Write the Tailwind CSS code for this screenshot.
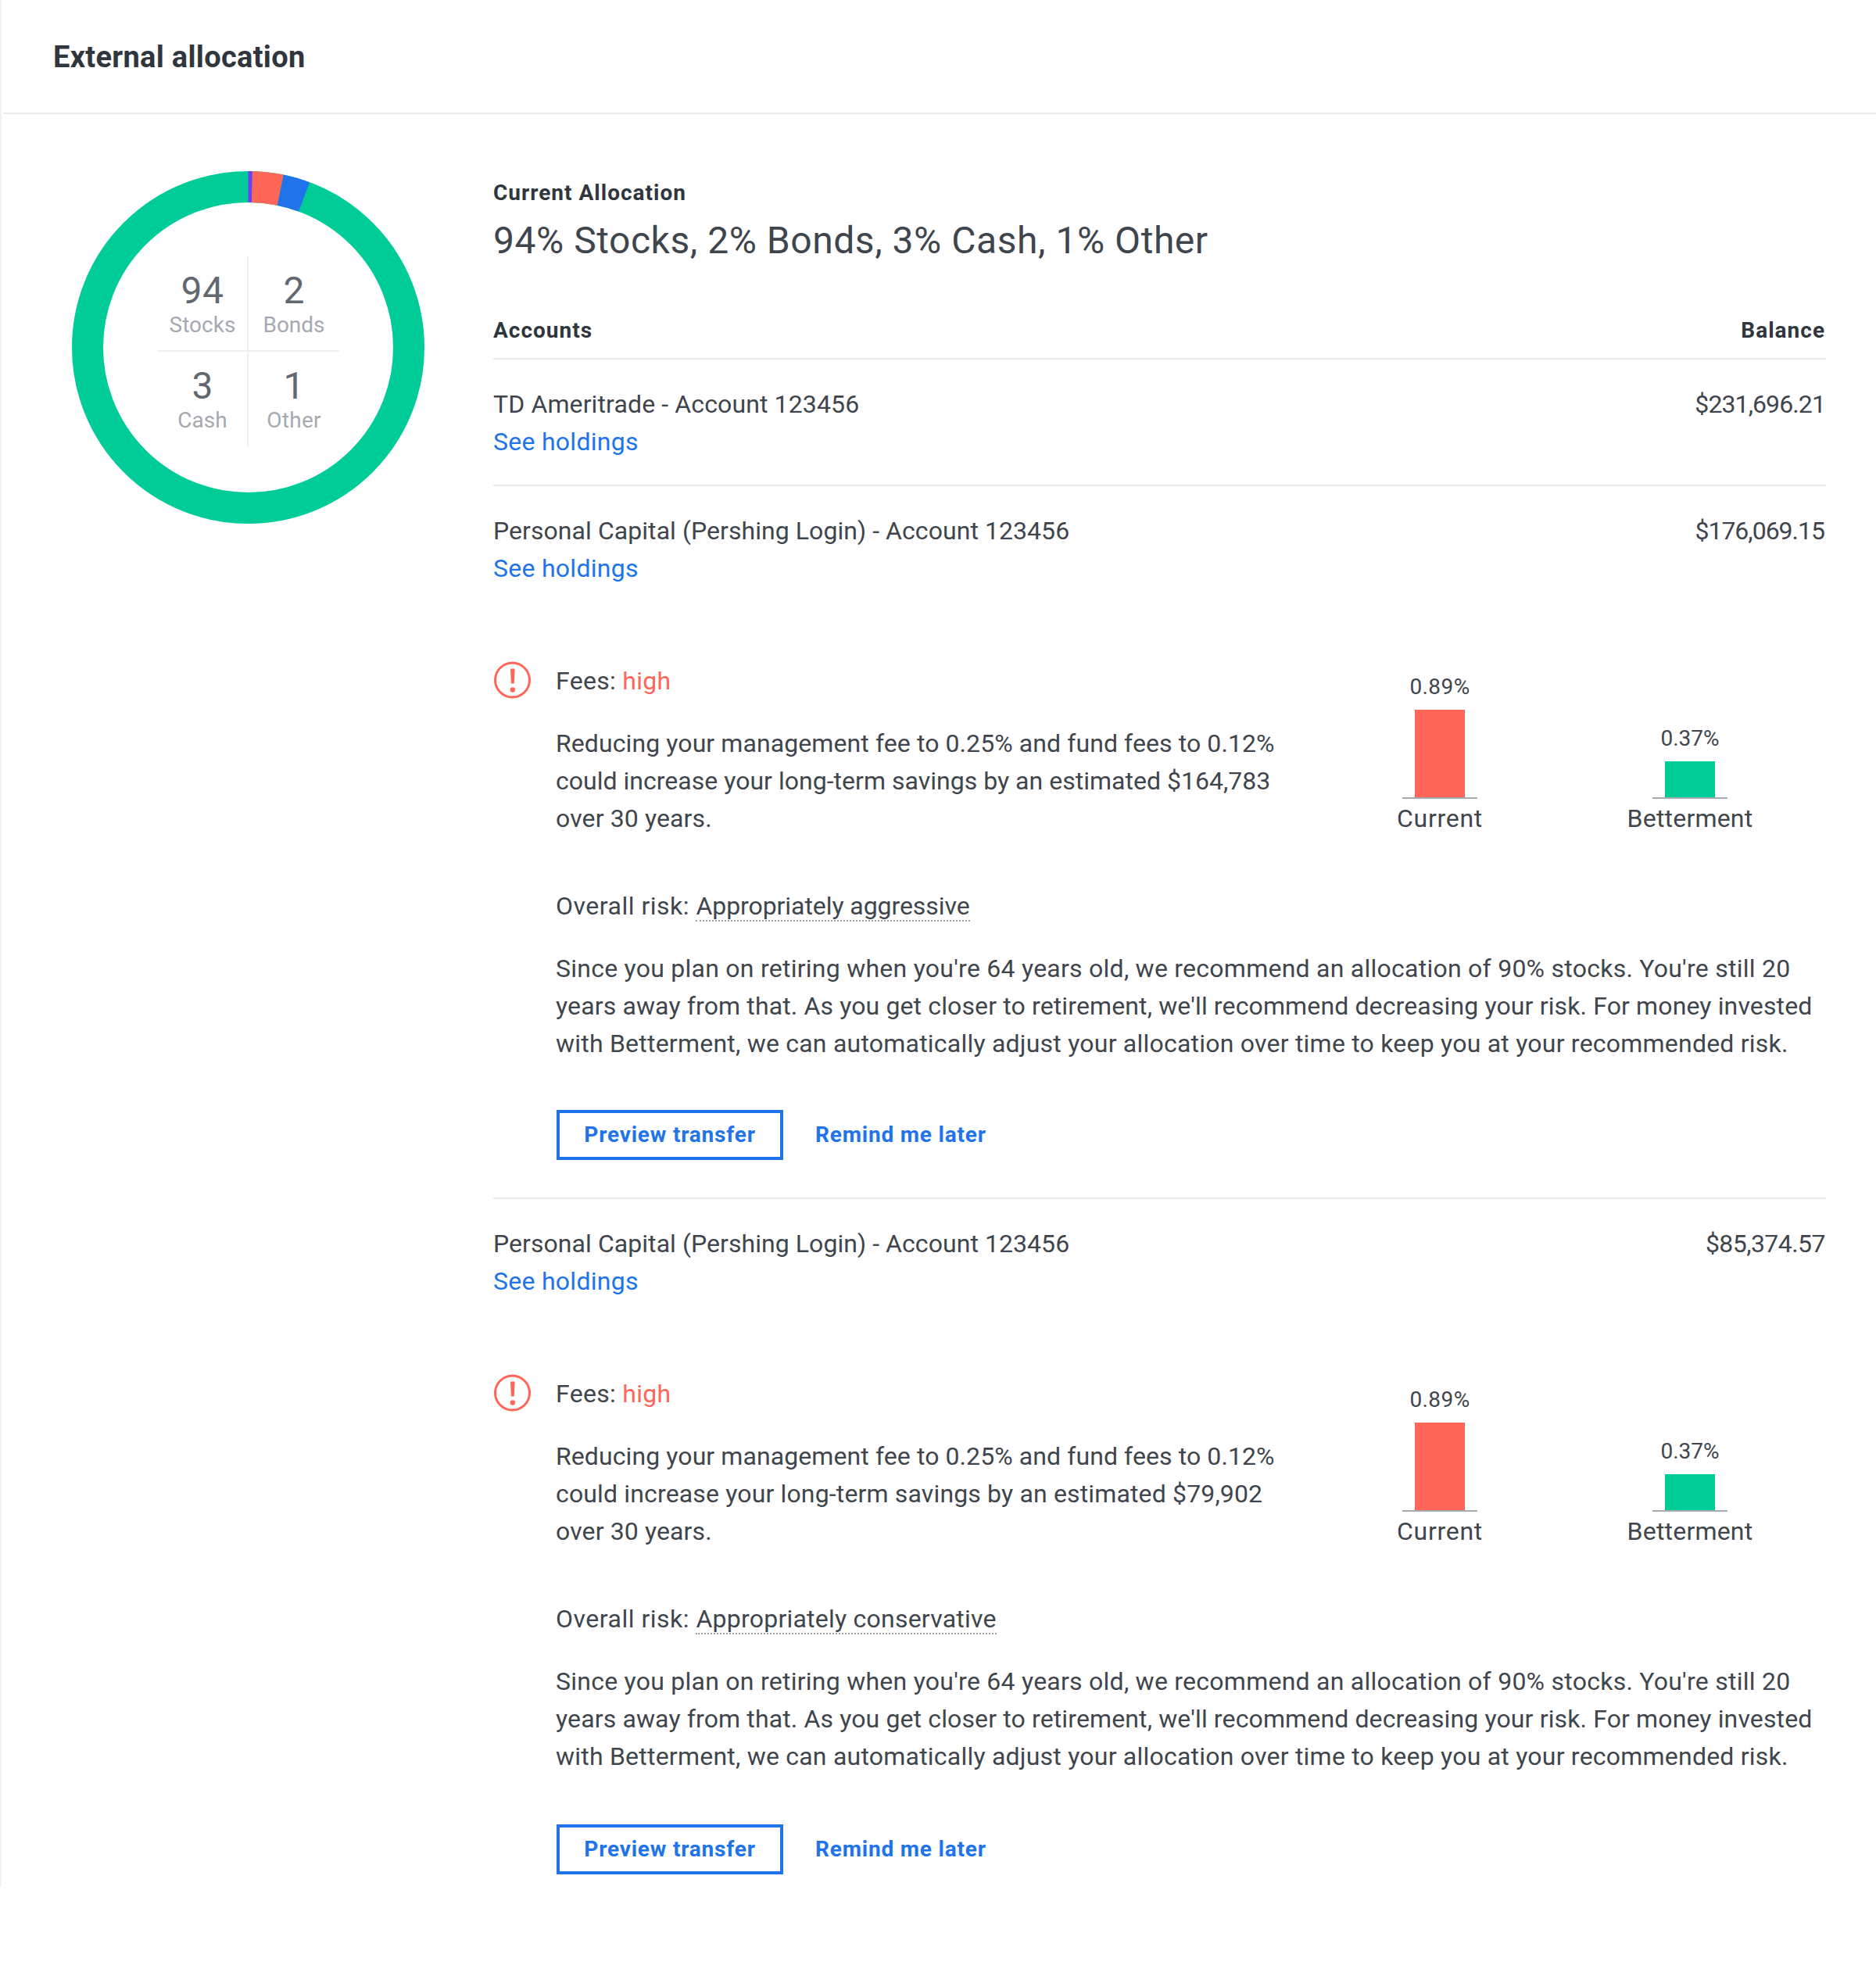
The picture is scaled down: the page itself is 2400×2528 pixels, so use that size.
<!DOCTYPE html>
<html lang="en">
<head>
<meta charset="utf-8">
<title>External allocation</title>
<script src="https://cdn.jsdelivr.net/npm/@tailwindcss/browser@4"></script>
</head>
<body class="bg-white">
<div class="w-[2400px] h-[2528px] bg-white text-[#3f454c] font-['Roboto',sans-serif] text-[32px] leading-[48px] tracking-[0.12px]">
  <div class="h-[2413px] border-l-2 border-[#eef0f3]">
    <header class="h-[146px] border-b-2 border-[#e8eaee] ml-[2px] pl-[64px] pt-[2px] flex items-center">
      <h1 class="text-[38px] leading-[48px] font-bold text-[#30363d] tracking-[0.3px]">External allocation</h1>
    </header>
    <div class="flex">
      <aside class="w-[629px] shrink-0 pl-[90px] pt-[73px]">
        <div class="relative w-[451px] h-[451px]">
          <svg class="w-[451px] h-[451px] -rotate-90" viewBox="0 0 451 451" fill="none" stroke-width="40">
            <circle cx="225.5" cy="225.5" r="205.5" stroke="#00cc98"/>
            <circle cx="225.5" cy="225.5" r="205.5" stroke="#6f3ff5" pathLength="360" stroke-dasharray="1.4 358.6"/>
            <circle cx="225.5" cy="225.5" r="205.5" stroke="#ff6658" pathLength="360" stroke-dasharray="10.2 349.8" stroke-dashoffset="-1.4"/>
            <circle cx="225.5" cy="225.5" r="205.5" stroke="#2173eb" pathLength="360" stroke-dasharray="8.8 351.2" stroke-dashoffset="-11.6"/>
          </svg>
          <div class="absolute left-[110px] top-[109px] w-[232px] h-[243px] grid grid-cols-2 grid-rows-[122px_121px] tracking-normal">
            <div class="border-r-2 border-b-2 border-[#eff0f3] flex flex-col items-center pt-[16px]">
              <span class="text-[48px] leading-[56px] text-[#62686f] tracking-[0.5px]">94</span>
              <span class="text-[28px] leading-[32px] text-[#a5a9b0]">Stocks</span>
            </div>
            <div class="border-b-2 border-[#eff0f3] flex flex-col items-center pt-[16px]">
              <span class="text-[48px] leading-[56px] text-[#62686f]">2</span>
              <span class="text-[28px] leading-[32px] text-[#a5a9b0]">Bonds</span>
            </div>
            <div class="border-r-2 border-[#eff0f3] flex flex-col items-center pt-[16px]">
              <span class="text-[48px] leading-[56px] text-[#62686f]">3</span>
              <span class="text-[28px] leading-[32px] text-[#a5a9b0]">Cash</span>
            </div>
            <div class="flex flex-col items-center pt-[16px]">
              <span class="text-[48px] leading-[56px] text-[#62686f]">1</span>
              <span class="text-[28px] leading-[32px] text-[#a5a9b0] tracking-[0.3px]">Other</span>
            </div>
          </div>
        </div>
      </aside>
      <main class="w-[1705px] pt-[77px]">
        <p class="text-[28px] leading-[48px] font-bold text-[#30363d] tracking-[1px]">Current Allocation</p>
        <p class="text-[48px] leading-[64px] mt-[5px] tracking-[0.54px]">94% Stocks, 2% Bonds, 3% Cash, 1% Other</p>
        <div class="flex justify-between mt-[63px] pb-[15px] border-b-2 border-[#e8eaee] text-[28px] leading-[40px] font-bold text-[#30363d] tracking-[1px]">
          <span>Accounts</span><span class="mr-[1px]">Balance</span>
        </div>

        <div class="flex justify-between pt-[33px] pb-[31px] border-b-2 border-[#e8eaee]">
          <div>
            <p>TD Ameritrade - Account 123456</p>
            <a class="text-[#2173eb] tracking-[0.27px]">See holdings</a>
          </div>
          <span class="mr-[1px] tracking-[-0.9px]">$231,696.21</span>
        </div>

        <section class="pt-[33px] pb-[48px] border-b-2 border-[#e8eaee]">
          <div class="flex justify-between">
            <div>
              <p class="tracking-[0.06px]">Personal Capital (Pershing Login) - Account 123456</p>
              <a class="text-[#2173eb] tracking-[0.27px]">See holdings</a>
            </div>
            <span class="mr-[2px] tracking-[-1px]">$176,069.15</span>
          </div>
          <div class="flex mt-[96px] h-[224px]">
            <svg class="w-[48px] h-[48px] mt-[-1px] mr-[32px] shrink-0" viewBox="0 0 48 48" fill="none">
              <circle cx="24.5" cy="24" r="22" stroke="#ff6658" stroke-width="3"/>
              <path d="M22 9.5h5.6l-.9 19h-3.8z" fill="#ff6658"/>
              <circle cx="24.8" cy="36.5" r="3.2" fill="#ff6658"/>
            </svg>
            <div class="w-[971px] shrink-0">
              <p class="tracking-[0.3px]">Fees: <span class="text-[#ff6658]">high</span></p>
              <div class="mt-[32px] whitespace-nowrap">
                <p class="tracking-[0.09px]">Reducing your management fee to 0.25% and fund fees to 0.12%</p>
                <p class="tracking-[0.02px]">could increase your long-term savings by an estimated $164,783</p>
                <p>over 30 years.</p>
              </div>
            </div>
            <div class="w-[320px] flex flex-col items-center justify-end">
              <span class="text-[28px] leading-[36px] mb-[11px] tracking-[0.4px]">0.89%</span>
              <div class="w-[64px] h-[112px] bg-[#ff6658]"></div>
              <div class="w-[96px] h-[2px] bg-[#a5a9b0]"></div>
              <span class="mt-[1px] tracking-[0.7px]">Current</span>
            </div>
            <div class="w-[320px] flex flex-col items-center justify-end">
              <span class="text-[28px] leading-[36px] mb-[11px] tracking-normal">0.37%</span>
              <div class="w-[64px] h-[46px] bg-[#00cc98]"></div>
              <div class="w-[96px] h-[2px] bg-[#a5a9b0]"></div>
              <span class="mt-[1px] tracking-[0.2px]">Betterment</span>
            </div>
          </div>
          <div class="ml-[80px] mt-[64px]">
            <p class="tracking-[0.5px]">Overall risk: <span class="border-b-2 border-dotted border-[#9aa0a8] leading-[36px] inline-block tracking-[-0.07px]">Appropriately aggressive</span></p>
            <div class="mt-[32px] whitespace-nowrap">
              <p class="tracking-[0.25px]">Since you plan on retiring when you're 64 years old, we recommend an allocation of 90% stocks. You're still 20</p>
              <p class="tracking-[0.13px]">years away from that. As you get closer to retirement, we'll recommend decreasing your risk. For money invested</p>
              <p class="tracking-[0.22px]">with Betterment, we can automatically adjust your allocation over time to keep you at your recommended risk.</p>
            </div>
            <div class="flex items-center mt-[61px] text-[#2173eb] text-[28px] font-bold tracking-[0.8px]">
              <a class="ml-[1px] w-[290px] h-[64px] border-4 border-[#2173eb] flex items-center justify-center">Preview transfer</a>
              <a class="ml-[41px]">Remind me later</a>
            </div>
          </div>
        </section>

        <section class="pt-[33px]">
          <div class="flex justify-between">
            <div>
              <p class="tracking-[0.06px]">Personal Capital (Pershing Login) - Account 123456</p>
              <a class="text-[#2173eb] tracking-[0.27px]">See holdings</a>
            </div>
            <span class="mr-[1px] tracking-[-0.55px]">$85,374.57</span>
          </div>
          <div class="flex mt-[96px] h-[224px]">
            <svg class="w-[48px] h-[48px] mt-[-1px] mr-[32px] shrink-0" viewBox="0 0 48 48" fill="none">
              <circle cx="24.5" cy="24" r="22" stroke="#ff6658" stroke-width="3"/>
              <path d="M22 9.5h5.6l-.9 19h-3.8z" fill="#ff6658"/>
              <circle cx="24.8" cy="36.5" r="3.2" fill="#ff6658"/>
            </svg>
            <div class="w-[971px] shrink-0">
              <p class="tracking-[0.3px]">Fees: <span class="text-[#ff6658]">high</span></p>
              <div class="mt-[32px] whitespace-nowrap">
                <p class="tracking-[0.09px]">Reducing your management fee to 0.25% and fund fees to 0.12%</p>
                <p class="tracking-[0.15px]">could increase your long-term savings by an estimated $79,902</p>
                <p>over 30 years.</p>
              </div>
            </div>
            <div class="w-[320px] flex flex-col items-center justify-end">
              <span class="text-[28px] leading-[36px] mb-[11px] tracking-[0.4px]">0.89%</span>
              <div class="w-[64px] h-[112px] bg-[#ff6658]"></div>
              <div class="w-[96px] h-[2px] bg-[#a5a9b0]"></div>
              <span class="mt-[1px] tracking-[0.7px]">Current</span>
            </div>
            <div class="w-[320px] flex flex-col items-center justify-end">
              <span class="text-[28px] leading-[36px] mb-[11px] tracking-normal">0.37%</span>
              <div class="w-[64px] h-[46px] bg-[#00cc98]"></div>
              <div class="w-[96px] h-[2px] bg-[#a5a9b0]"></div>
              <span class="mt-[1px] tracking-[0.2px]">Betterment</span>
            </div>
          </div>
          <div class="ml-[80px] mt-[64px]">
            <p class="tracking-[0.5px]">Overall risk: <span class="border-b-2 border-dotted border-[#9aa0a8] leading-[36px] inline-block tracking-[0.23px]">Appropriately conservative</span></p>
            <div class="mt-[32px] whitespace-nowrap">
              <p class="tracking-[0.25px]">Since you plan on retiring when you're 64 years old, we recommend an allocation of 90% stocks. You're still 20</p>
              <p class="tracking-[0.13px]">years away from that. As you get closer to retirement, we'll recommend decreasing your risk. For money invested</p>
              <p class="tracking-[0.22px]">with Betterment, we can automatically adjust your allocation over time to keep you at your recommended risk.</p>
            </div>
            <div class="flex items-center mt-[63px] text-[#2173eb] text-[28px] font-bold tracking-[0.8px]">
              <a class="ml-[1px] w-[290px] h-[64px] border-4 border-[#2173eb] flex items-center justify-center">Preview transfer</a>
              <a class="ml-[41px]">Remind me later</a>
            </div>
          </div>
        </section>
      </main>
    </div>
  </div>
</div>
</body>
</html>
